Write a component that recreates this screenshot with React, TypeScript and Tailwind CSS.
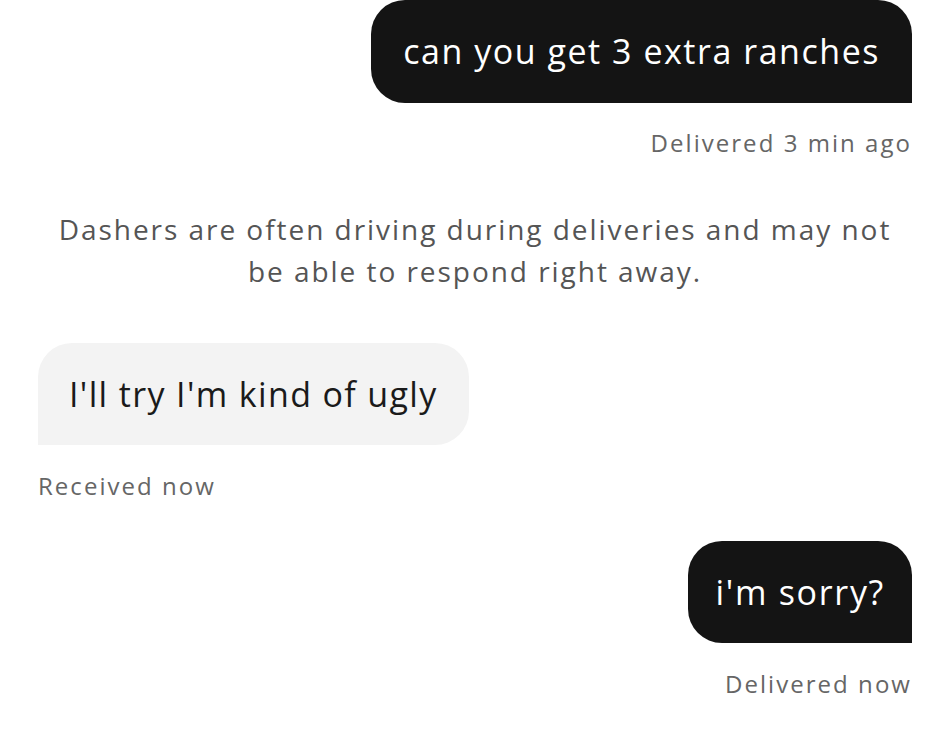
export default function App() {
    return (
        <div className="min-h-[745px] bg-white px-[38px] font-['Open_Sans','Liberation_Sans',sans-serif]">
            {/* outgoing */}
            <div className="flex justify-end">
                <div className="flex h-[103px] items-center rounded-[34px] rounded-br-none bg-[#141414] px-[32px] text-[34px] tracking-[0.045em] text-white">
                    can you get 3 extra ranches
                </div>
            </div>
            <div className="mt-[25px] text-right text-[24px] leading-[30px] tracking-[0.085em] text-[#666]">Delivered 3 min ago</div>

            {/* notice */}
            <div className="mx-auto mt-[50px] max-w-[850px] text-center text-[28px] leading-[42px] tracking-[0.07em] text-[#555]">
                Dashers are often driving during deliveries and may not be able to respond right away.
            </div>

            {/* incoming */}
            <div className="mt-[51px] flex justify-start">
                <div className="flex h-[102px] items-center rounded-[34px] rounded-bl-none bg-[#f3f3f3] px-[31px] text-[34px] tracking-[0.04em] text-[#1a1a1a]">
                    I'll try I'm kind of ugly
                </div>
            </div>
            <div className="mt-[26px] text-[24px] leading-[30px] tracking-[0.085em] text-[#666]">Received now</div>

            <div className="mt-[40px] flex justify-end">
                <div className="flex h-[102px] items-center rounded-[34px] rounded-br-none bg-[#141414] px-[27px] text-[34px] tracking-[0.05em] text-white">
                    i'm sorry?
                </div>
            </div>
            <div className="mt-[26px] text-right text-[24px] leading-[30px] tracking-[0.085em] text-[#666]">Delivered now</div>
        </div>
    );
}
